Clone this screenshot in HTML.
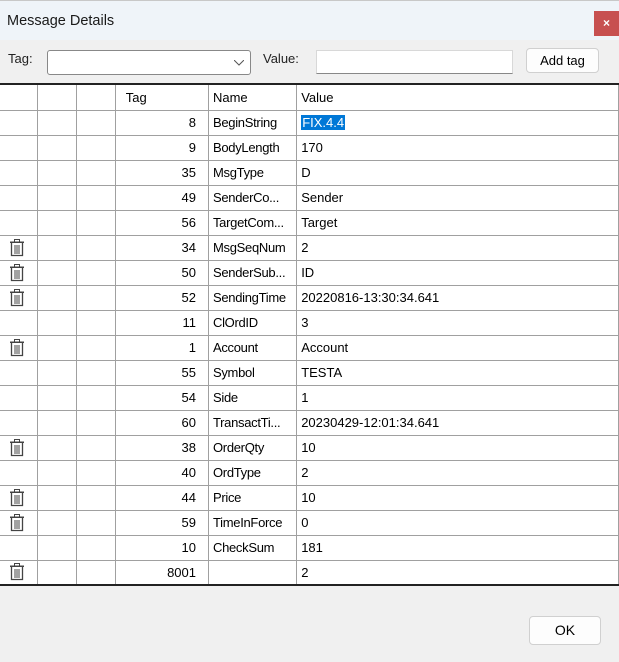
<!DOCTYPE html>
<html><head><style>
*{margin:0;padding:0;box-sizing:border-box}
body{width:619px;height:662px;background:#f0f0f0;font-family:"Liberation Sans",sans-serif;font-size:13px;color:#000;position:relative;overflow:hidden}
.title{position:absolute;left:0;top:0;width:619px;height:40px;background:#eff4f9;border-top:1px solid #c8c8c8}
.title span{position:absolute;left:7px;top:12px;font-size:14.5px;color:#1a1a1a}
.close{position:absolute;left:594px;top:10px;width:25px;height:25px;background:#c75050;color:#fff;font-size:12px;text-align:center;line-height:24px;font-weight:bold}
.lbl{position:absolute;top:51px;font-size:13px;color:#222}
.combo{position:absolute;left:47px;top:50px;width:204px;height:25px;background:#fff;border:1px solid #888;border-radius:3px}
.inp{position:absolute;left:316px;top:50px;width:197px;height:24px;background:#fff;border:1px solid #d8d8d8;border-bottom:1px solid #888}
.btn{position:absolute;background:#fdfdfd;border:1px solid #d0d0d0;border-radius:4px;text-align:center;font-size:13px}
table{position:absolute;left:0;top:83px;border-collapse:collapse;background:#fff;border-top:2px solid #222;border-bottom:2px solid #222;width:619px;table-layout:fixed}
td{border:1px solid #a0a0a0;height:25px;padding:0 4px;white-space:nowrap;overflow:hidden;font-size:13px}
tr td:first-child{border-left:none}
tr.h td{height:26px}
td.n{text-align:right;padding-right:12px}
td.nm{letter-spacing:-0.3px}
.sel{background:#0078d7;color:#fff;padding:0 1px}
svg{display:block;margin-left:9px}
</style></head><body>
<div class="title"><span>Message Details</span><div class="close">×</div></div>
<div class="lbl" style="left:8px">Tag:</div>
<div class="combo"><svg style="position:absolute;left:186px;top:9px;margin:0" width="10" height="6"><path d="M0 0 L5 5 L10 0" fill="none" stroke="#555"/></svg></div>
<div class="lbl" style="left:263px">Value:</div>
<div class="inp"></div>
<div class="btn" style="left:526px;top:48px;width:73px;height:25px;line-height:23px">Add tag</div>
<table>
<colgroup><col style="width:37px"><col style="width:39px"><col style="width:39px"><col style="width:93px"><col style="width:88px"><col style="width:321px"></colgroup>
<tr class="h"><td></td><td></td><td></td><td style="padding-left:10px">Tag</td><td>Name</td><td>Value</td></tr>
<tr><td></td><td></td><td></td><td class="n">8</td><td class="nm">BeginString</td><td><span class="sel">FIX.4.4</span></td></tr>
<tr><td></td><td></td><td></td><td class="n">9</td><td class="nm">BodyLength</td><td>170</td></tr>
<tr><td></td><td></td><td></td><td class="n">35</td><td class="nm">MsgType</td><td>D</td></tr>
<tr><td></td><td></td><td></td><td class="n">49</td><td class="nm">SenderCo...</td><td>Sender</td></tr>
<tr><td></td><td></td><td></td><td class="n">56</td><td class="nm">TargetCom...</td><td>Target</td></tr>
<tr><td class="t"></td><td></td><td></td><td class="n">34</td><td class="nm">MsgSeqNum</td><td>2</td></tr>
<tr><td class="t"></td><td></td><td></td><td class="n">50</td><td class="nm">SenderSub...</td><td>ID</td></tr>
<tr><td class="t"></td><td></td><td></td><td class="n">52</td><td class="nm">SendingTime</td><td>20220816-13:30:34.641</td></tr>
<tr><td></td><td></td><td></td><td class="n">11</td><td class="nm">ClOrdID</td><td>3</td></tr>
<tr><td class="t"></td><td></td><td></td><td class="n">1</td><td class="nm">Account</td><td>Account</td></tr>
<tr><td></td><td></td><td></td><td class="n">55</td><td class="nm">Symbol</td><td>TESTA</td></tr>
<tr><td></td><td></td><td></td><td class="n">54</td><td class="nm">Side</td><td>1</td></tr>
<tr><td></td><td></td><td></td><td class="n">60</td><td class="nm">TransactTi...</td><td>20230429-12:01:34.641</td></tr>
<tr><td class="t"></td><td></td><td></td><td class="n">38</td><td class="nm">OrderQty</td><td>10</td></tr>
<tr><td></td><td></td><td></td><td class="n">40</td><td class="nm">OrdType</td><td>2</td></tr>
<tr><td class="t"></td><td></td><td></td><td class="n">44</td><td class="nm">Price</td><td>10</td></tr>
<tr><td class="t"></td><td></td><td></td><td class="n">59</td><td class="nm">TimeInForce</td><td>0</td></tr>
<tr><td></td><td></td><td></td><td class="n">10</td><td class="nm">CheckSum</td><td>181</td></tr>
<tr><td class="t"></td><td></td><td></td><td class="n">8001</td><td class="nm"></td><td>2</td></tr>
</table>
<div class="btn" style="left:529px;top:616px;width:72px;height:29px;line-height:27px;font-size:14px">OK</div>
<script>
document.querySelectorAll('td.t').forEach(function(t){t.innerHTML='<svg width="16" height="18" viewBox="0 0 16 18"><path d="M5.5 2.5V0.5h5v2" fill="none" stroke="#444"/><rect x="1" y="2.5" width="14" height="1.5" fill="#444"/><path d="M2.5 4v12.5h11V4" fill="none" stroke="#444" stroke-width="1.3"/><path d="M6 6v9M8 6v9M10 6v9" stroke="#444"/></svg>';t.style.padding='0'});
</script>
</body></html>
